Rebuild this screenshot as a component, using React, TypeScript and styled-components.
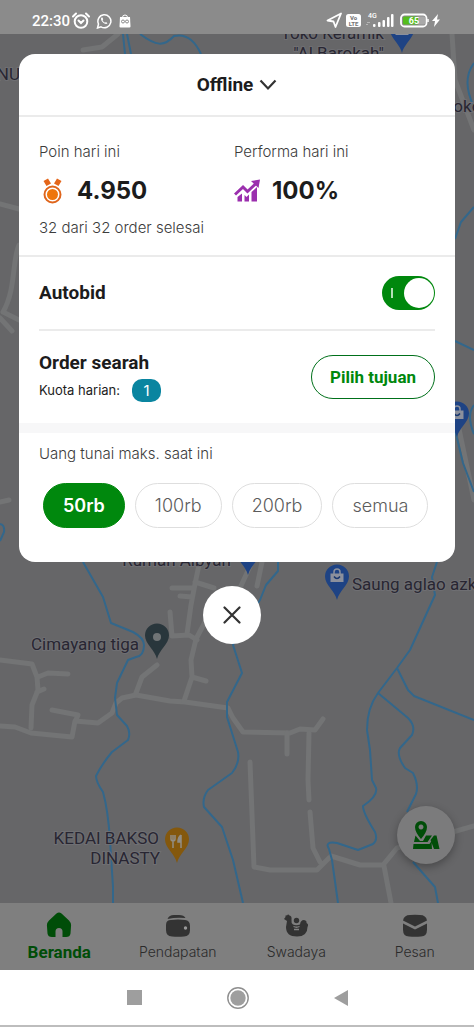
import React, { useState } from 'react';
import styled, { createGlobalStyle } from 'styled-components';

const GlobalStyle = createGlobalStyle`
  *, *::before, *::after { box-sizing: border-box; }
  body { margin: 0; background: #fff; font-family: Inter, "Liberation Sans", sans-serif; color: #1c1c1c; }
  button, input { font: inherit; }
`;

const Page = styled.div`
  min-height: 100vh;
  display: flex;
  flex-direction: column;
`;

const StatusBar = styled.header`
  height: 34px;
  padding: 8px 32px 0;
  display: flex;
  justify-content: space-between;
  background: #8b8b8b;
  color: #fff;
`;

const StatusGroup = styled.div`
  height: 26px;
  display: flex;
  align-items: center;
  gap: 6px;
`;

const Clock = styled.span`
  font: 500 15px/26px Roboto, sans-serif;
  margin-right: -4px;
`;

const Stage = styled.main`
  position: relative;
  flex: 1;
  display: flex;
  flex-direction: column;
  align-items: center;
  padding: 20px 19px 39px;
  overflow: hidden;
`;

const MapCanvas = styled.svg`
  position: absolute;
  inset: 0;
  width: 100%;
  height: 100%;
  font-family: Roboto, sans-serif;
  font-size: 17px;
`;

const Sheet = styled.section`
  position: relative;
  width: 100%;
  background: #fff;
  border-radius: 16px;
  overflow: hidden;
`;

const StatusPicker = styled.button`
  width: 100%;
  height: 63px;
  display: flex;
  align-items: center;
  justify-content: center;
  gap: 6px;
  padding: 0;
  border: 0;
  border-bottom: 2px solid #ebebeb;
  background: none;
  color: #1c1c1c;
  font: 700 19px/24px Roboto, sans-serif;
`;

const Stats = styled.div`
  height: 140px;
  display: grid;
  grid-template-columns: 195px 1fr;
  align-content: start;
  padding: 24px 20px 0;
  border-bottom: 2px solid #ebebeb;
`;

const Muted = styled.p`
  margin: 0;
  font-size: 15px;
  line-height: 22px;
  font-weight: 300;
  color: #3c3c3c;
`;

const Figure = styled.div`
  height: 54px;
  padding-top: 2px;
  display: flex;
  align-items: center;
  gap: 12px;
  font-size: 24px;
  line-height: 30px;
  font-weight: 700;
`;

const Block = styled.div<{ $height: number; $rule?: boolean }>`
  height: ${(p) => p.$height}px;
  margin: 0 20px;
  display: flex;
  align-items: center;
  justify-content: space-between;
  border-bottom: ${(p) => (p.$rule ? '2px solid #ebebeb' : '0')};
`;

const Title = styled.h2`
  margin: 0;
  font: 700 19px/26px Roboto, sans-serif;
`;

const Switch = styled.input`
  appearance: none;
  position: relative;
  width: 53px;
  height: 34px;
  margin: 0;
  border-radius: 17px;
  background: #8b8b8b;
  &:checked { background: #00880d; }
  &::before {
    content: '';
    position: absolute;
    left: 9px;
    top: 12px;
    width: 2px;
    height: 10px;
    background: #b5dfb8;
  }
  &::after {
    content: '';
    position: absolute;
    left: 2px;
    top: 2px;
    width: 30px;
    height: 30px;
    border-radius: 50%;
    background: #fff;
  }
  &:checked::after { left: 22px; }
`;

const Quota = styled.p`
  margin: 0;
  display: flex;
  align-items: center;
  gap: 12px;
  font-size: 13px;
  line-height: 28px;
`;

const QuotaBadge = styled.span`
  width: 29px;
  height: 23px;
  border-radius: 10px;
  background: #0a85a0;
  color: #fff;
  font-size: 15px;
  line-height: 23px;
  text-align: center;
`;

const OutlineButton = styled.button`
  width: 124px;
  height: 44px;
  padding: 0;
  border: 1px solid #00701a;
  border-radius: 22px;
  background: #fff;
  color: #00880d;
  font: 700 17px/24px Roboto, sans-serif;
`;

const Cash = styled.fieldset`
  margin: 0;
  padding: 20px 20px 34px;
  border: 0;
  border-top: 10px solid #f7f7f8;
`;

const Legend = styled(Muted).attrs({ as: 'legend' })`
  float: left;
  width: 100%;
  padding: 0;
  margin-top: -10px;
`;

const Chips = styled.div`
  clear: both;
  display: flex;
  gap: 10px;
  padding: 18px 0 0 4px;
`;

const ChipInput = styled.input`
  position: absolute;
  opacity: 0;
`;

const Chip = styled.label<{ $on: boolean }>`
  height: 45px;
  padding: 0 19px;
  display: flex;
  align-items: center;
  border: 1px solid ${(p) => (p.$on ? '#00880d' : '#dedede')};
  border-radius: 23px;
  background: ${(p) => (p.$on ? '#00880d' : '#fff')};
  color: ${(p) => (p.$on ? '#fff' : '#5c5c5c')};
  font-size: 18px;
  font-weight: ${(p) => (p.$on ? 600 : 300)};
`;

const CloseRow = styled.div`
  width: 100%;
  display: flex;
  justify-content: center;
  padding: 24px 10px 0 0;
`;

const RoundButton = styled.button`
  position: relative;
  width: 58px;
  height: 58px;
  padding: 0;
  border: 0;
  border-radius: 50%;
  display: grid;
  place-items: center;
  background: #fff;
`;

const MapButton = styled(RoundButton)`
  align-self: flex-end;
  margin-top: auto;
  background: #7b7b7c;
  box-shadow: 0 3px 8px rgba(0, 0, 0, 0.3);
`;

const TabBar = styled.nav`
  height: 67px;
  display: grid;
  grid-template-columns: repeat(4, 1fr);
  background: #7f7f7f;
`;

const Tab = styled.a<{ $active?: boolean }>`
  display: flex;
  flex-direction: column;
  align-items: center;
  padding-top: 9px;
  gap: 1px;
  color: ${(p) => (p.$active ? '#004d08' : '#2b2b2b')};
  font-family: ${(p) => (p.$active ? 'Roboto' : 'Inter')}, sans-serif;
  font-size: ${(p) => (p.$active ? 17 : 14)}px;
  font-weight: ${(p) => (p.$active ? 700 : 300)};
  line-height: 26px;
  text-decoration: none;
`;

const SystemBar = styled.footer`
  height: 57px;
  display: flex;
  justify-content: center;
  align-items: center;
  gap: 85px;
  background: #fff;
  border-bottom: 2px solid #bdbdbd;
`;

const SystemButton = styled.button`
  display: flex;
  padding: 0;
  border: 0;
  background: none;
`;

const Pin = ({ x, y, fill, children }: { x: number; y: number; fill: string; children?: React.ReactNode }) => (
  <g transform={`translate(${x} ${y})`}>
    <path d="M0 35C-2 26-12 20-12 11.500A12 12 0 0 1 12 11.500C12 20 2 26 0 35Z" fill={fill} />
    {children}
  </g>
);

const Bag = () => (
  <g>
    <path d="M-6.500 8.500h13v8.500h-13z" fill="#8b909c" />
    <path d="M-3 9V7a3 3 0 0 1 6 0v2" fill="none" stroke="#8b909c" strokeWidth="1.500" />
    <path d="M-3 11.500q3 4 6 0" fill="none" stroke="#17366e" strokeWidth="1.500" />
  </g>
);

const AreaMap = () => (
  <MapCanvas viewBox="0 34 474 869" preserveAspectRatio="xMidYMin slice" aria-label="Peta">
    <rect y="34" width="474" height="869" fill="#666668" />
    <g fill="none" stroke="#737475" strokeWidth="5" strokeLinecap="round" strokeLinejoin="round">
      <path d="M83 50L102 47 118 34" />
      <path d="M452 34L455 80 474 130" />
      <path d="M0 204L19 209M19 245C12 260 16 290 3 312L19 320M0 318L12 331M0 502L9 500" />
      <path d="M455 410L474 500" />
      <path d="M0 660L32 664 37 677 38 690 32 705 31 728M38 677L48 673 68 674M37 692L44 689" />
      <path d="M0 726L15 727 31 733 72 737 75 721 98 723 112 713 116 703 122 698 136 695 170 701 185 702 228 708 233 718 243 732 290 733 300 729 315 730 323 719M52 710L78 715 75 722" />
      <path d="M136 693L142 677 157 665M184 701L192 677 191 660 196 639 205 622M192 677L206 681M170 612L172 636 189 635 197 640M187 634L191 605 195 584 200 560M195 582L214 588M172 588L193 588M180 596L192 597M240 588L252 562M257 586L262 562" />
      <path d="M287 733V754M250 762L254 867 270 870 317 870 329 858M309 733L308 780 309 800M310 812L313 848 320 862M331 856L360 865 383 865 397 848 474 826M384 866L391 903" />
    </g>
    <g fill="none" stroke="#33678b" strokeWidth="2" strokeLinejoin="round">
      <path d="M123 34L125 54M127 34L131 54M140 34C156 46 164 47 174 36Q191 32 201 54" />
      <path d="M474 63Q461 80 474 107M474 207L461 222 455 239M455 341L474 350M455 430L463 463 474 492M474 405Q466 415 474 434M0 524Q5 525 4 532L0 541" />
      <path d="M83 562L103 597 111 623 133 632Q144 638 144 645 144 656 136 657L128 660 117 683 115 698 117 715 127 726Q131 733 128 740L112 752Q102 764 96 776 96 782 103 792 108 810 110 840L113 887V903" />
      <path d="M278 562V571L266 585 260 600 240 630 233 645 242 673 227 702 227 717 238 752Q240 763 232 773L208 790Q202 798 204 807L222 827 233 860 243 903" />
      <path d="M437 562L432 577 435 595 410 650 397 668 378 693Q367 708 367 730L370 750 372 780 376 788Q378 796 363 806 363 813 375 832 378 840 373 844L358 850 337 843Q324 841 329 849L332 860 338 903" />
      <path d="M397 668L408 690 414 696 474 720M378 693L408 718Q416 726 412 735L400 748Q396 755 405 768L413 773Q419 785 416 794L407 812M413 862L435 887 438 903" />
    </g>
    <g fill="#282632" stroke="#6f6f73" strokeWidth="2" paintOrder="stroke">
      <text x="384" y="39" textAnchor="end">Toko Keramik</text>
      <text x="384" y="59" textAnchor="end">"Al Barokah"</text>
      <text x="20" y="80" textAnchor="end">NU</text>
      <text x="444" y="112">Toko</text>
      <text x="231" y="566" textAnchor="end">Rumah Albyan</text>
      <text x="139" y="650" textAnchor="end">Cimayang tiga</text>
      <text x="352" y="590">Saung aglao azk</text>
      <text x="159" y="844" textAnchor="end">KEDAI BAKSO</text>
      <text x="160" y="864" textAnchor="end">DINASTY</text>
    </g>
    <Pin x={402} y={18} fill="#1e4384"><Bag /></Pin>
    <Pin x={457} y={402} fill="#1e4384"><Bag /></Pin>
    <Pin x={248} y={540} fill="#1e4384" />
    <Pin x={337} y={565} fill="#1e4384"><Bag /></Pin>
    <Pin x={157} y={624} fill="#29363c"><circle cy="13" r="4" fill="#707476" /></Pin>
    <Pin x={177} y={828} fill="#84580d">
      <g stroke="#918d85" strokeWidth="1.500" fill="none">
        <path d="M-6 7v4q0 2 2 2t2-2V7M-4 7v13M4 20V7" />
        <path d="M4 7q-3 2-3 7h3" fill="#918d85" />
      </g>
    </Pin>
  </MapCanvas>
);

const AlarmIcon = () => (
  <svg width="18" height="18" viewBox="0 0 18 18" fill="none" stroke="#fff" strokeWidth="2" strokeLinecap="round" aria-hidden="true">
    <circle cx="9" cy="9.500" r="6.300" /><path d="M1 4.500L4 1.500M14 1.500L17 4.500" /><path d="M6.500 8.500L9 11l2.500-2.500" />
  </svg>
);
const WhatsIcon = () => (
  <svg width="16" height="16" viewBox="0 0 15 16" fill="none" stroke="#fff" aria-hidden="true">
    <path d="M1 15l1-4A6.500 6.500 0 1 1 4.500 13.800z" strokeWidth="1.500" />
    <path d="M5 4.500c-1 1-.5 3 1.300 4.800S10 11.500 11 10.300L9.500 9l-1 .7Q6.800 9 6 7.200L6.700 6.300 6 4.500z" fill="#fff" stroke="none" />
  </svg>
);
const ShopIcon = () => (
  <svg width="14" height="14" viewBox="0 0 12 14" aria-hidden="true">
    <path d="M1 3h10l.5 9.500a1 1 0 0 1-1 1h-9a1 1 0 0 1-1-1z" fill="#fff" />
    <path d="M3.500 3.500a2.500 2.500 0 0 1 5 0" fill="none" stroke="#fff" />
    <circle cx="4" cy="7.500" r="1.500" fill="none" stroke="#8b8b8b" /><circle cx="8" cy="7.500" r="1.500" fill="none" stroke="#8b8b8b" />
  </svg>
);

const StatusRight = () => (
  <svg width="116" height="18" viewBox="0 0 116 18" fontFamily="Roboto, sans-serif" role="img" aria-label="Sinyal 4G, baterai 65 persen">
    <path d="M1.500 8.500L15 1.500 9.500 15 7.500 9.500z" fill="none" stroke="#fff" strokeWidth="1.800" strokeLinejoin="round" />
    <rect x="20" y="2" width="15" height="13" rx="2.500" fill="#fff" />
    <text x="27.500" y="8" fontSize="6" fontWeight="800" fill="#777" textAnchor="middle">Vo</text>
    <text x="27.500" y="14" fontSize="6" fontWeight="800" fill="#777" textAnchor="middle">LTE</text>
    <text x="42" y="6" fontSize="7" fontWeight="500" fill="#fff">4G</text>
    <path d="M40 12.500h2M41 10.500h3" stroke="#b5b5b5" />
    <g fill="#fff"><rect x="47" y="12" width="2.500" height="3" rx="1" /><rect x="52" y="10" width="2.500" height="5" rx="1" /><rect x="56.500" y="8" width="2.500" height="7" rx="1" /><rect x="61" y="5" width="2.500" height="10" rx="1" /><rect x="65" y="2" width="2.500" height="13" rx="1" /></g>
    <rect x="75" y="2.500" width="25.500" height="12" rx="3.500" fill="none" stroke="#fff" strokeWidth="1.800" />
    <rect x="77" y="4.500" width="15" height="8" rx="1.500" fill="#55bd1d" /><rect x="92" y="4.500" width="7" height="8" rx="1" fill="#a9a9a9" />
    <path d="M102 7v3" stroke="#fff" strokeWidth="1.500" />
    <text x="88" y="12" fontSize="9" fontWeight="700" fill="#fff" textAnchor="middle">65</text>
    <path d="M112 2l-6 7h3l-1 6 6-7.500h-3z" fill="#fff" />
  </svg>
);

const MedalIcon = () => (
  <svg width="26" height="26" viewBox="0 0 26 26" aria-hidden="true">
    <path d="M4.500 3L9 .5l3 5L7.500 8zM22.500 3L18 .5l-3 5L19.500 8z" fill="#e4661a" />
    <circle cx="13.500" cy="16.500" r="8" fill="#fff" stroke="#df651c" strokeWidth="2" /><circle cx="13.500" cy="16.500" r="5.500" fill="#ee750c" />
  </svg>
);
const ChartIcon = () => (
  <svg width="26" height="24" viewBox="0 0 26 24" aria-hidden="true" fill="#9b2fae">
    <path d="M3.500 18L8 14.500v8H3.500zM10.500 16l2 2 2.500-2.500v7h-4.500zM17.500 13L23 8v14.500h-5.500z" />
    <path d="M1 15.500L9 8l4.500 4.500L22 4.500" stroke="#9b2fae" strokeWidth="3" fill="none" /><path d="M17 2l9-1.500-1.500 8.500z" />
  </svg>
);

const HomeIcon = () => (
  <svg width="26" height="26" viewBox="0 0 26 26" aria-hidden="true"><path d="M10.500 1.500Q13-.5 15.500 1.500L23 8.500Q25.500 11 25 14.500L24.500 21.500Q24 25 20 25H16.500V19.500Q16.500 16 13 16T9.500 19.500V25H6Q2 25 1.500 21.500L1 14.500Q.5 11 3 8.500z" fill="#004d08" /></svg>
);
const WalletIcon = () => (
  <svg width="26" height="26" viewBox="0 0 26 26" fill="#333" aria-hidden="true"><path d="M2.500 7Q4 3 9 3h5q5 0 6.500 3Q11 5 2.500 7z" /><path d="M1 13Q1 8 6 8q7-1 14 0 5 .5 5 6v4q0 6-6 6.500-6 .6-12 0Q1 24 1 18z" /><circle cx="20.500" cy="16" r="1.700" fill="#999" /></svg>
);
const HenIcon = () => (
  <svg width="26" height="26" viewBox="0 0 26 26" fill="#333" aria-hidden="true"><path d="M1 7L2.500 5Q2 2.500 4 3.500 5 1.500 6.500 3.500 9 4 8.500 7.500 8 11 10 12.500 13 14 17 12.500 17.500 8 21 8 24 8.500 23.500 11 26 12 24.500 15 24.500 24.500 14 24.500 3 24.500 3 15L4 9z" /><circle cx="13.500" cy="8.500" r="2.700" /><path d="M10.500 14.500q3 1.500 6 0M11 17.500h5" fill="none" stroke="#808080" strokeWidth="1.300" /></svg>
);
const MailIcon = () => (
  <svg width="26" height="26" viewBox="0 0 26 26" fill="#333" aria-hidden="true"><path d="M1 8.500Q2 3 8 3q5-.5 10 0 6 0 7 5.500L13 14.500z" /><path d="M1 11.500l12 6 12-6v6q0 7-6 7-6 .6-12 0-6 0-6-7z" /></svg>
);

const tabs = [
  { name: 'Beranda', icon: <HomeIcon /> },
  { name: 'Pendapatan', icon: <WalletIcon /> },
  { name: 'Swadaya', icon: <HenIcon /> },
  { name: 'Pesan', icon: <MailIcon /> },
];
const limits = ['50rb', '100rb', '200rb', 'semua'];

export default function App() {
  const [limit, setLimit] = useState('50rb');
  const [autobid, setAutobid] = useState(true);
  return (
    <Page>
      <GlobalStyle />
      <StatusBar>
        <StatusGroup><Clock>22:30</Clock><AlarmIcon /><WhatsIcon /><ShopIcon /></StatusGroup>
        <StatusGroup><StatusRight /></StatusGroup>
      </StatusBar>
      <Stage>
        <AreaMap />
        <Sheet>
          <StatusPicker>
            Offline
            <svg width="18" height="12" viewBox="0 0 18 12" fill="none" stroke="#333" strokeWidth="2.200" aria-hidden="true"><path d="M1.500 1.500L9 9.500l7.500-8" /></svg>
          </StatusPicker>
          <Stats>
            <div>
              <Muted>Poin hari ini</Muted>
              <Figure><MedalIcon />4.950</Figure>
              <Muted>32 dari 32 order selesai</Muted>
            </div>
            <div>
              <Muted>Performa hari ini</Muted>
              <Figure><ChartIcon />100%</Figure>
            </div>
          </Stats>
          <Block $height={74} $rule>
            <Title as="label" htmlFor="autobid">Autobid</Title>
            <Switch id="autobid" type="checkbox" role="switch" checked={autobid} onChange={() => setAutobid(!autobid)} />
          </Block>
          <Block $height={92}>
            <div>
              <Title>Order searah</Title>
              <Quota>Kuota harian: <QuotaBadge>1</QuotaBadge></Quota>
            </div>
            <OutlineButton>Pilih tujuan</OutlineButton>
          </Block>
          <Cash>
            <Legend>Uang tunai maks. saat ini</Legend>
            <Chips>
              {limits.map((v) => (
                <Chip key={v} $on={v === limit}>
                  <ChipInput type="radio" name="limit" checked={v === limit} onChange={() => setLimit(v)} />
                  {v}
                </Chip>
              ))}
            </Chips>
          </Cash>
        </Sheet>
        <CloseRow>
          <RoundButton aria-label="Tutup">
            <svg width="18" height="18" viewBox="0 0 18 18" stroke="#333" strokeWidth="2.200" strokeLinecap="round" aria-hidden="true"><path d="M1.500 1.500l15 15M16.500 1.500l-15 15" /></svg>
          </RoundButton>
        </CloseRow>
        <MapButton aria-label="Lokasi">
          <svg width="28" height="30" viewBox="0 0 28 30" fill="#004d08" aria-hidden="true">
            <path fillRule="evenodd" d="M9 19Q3 12 3 7a6 6 0 0 1 12 0Q15 12 9 19zM9 4.500a2.500 2.500 0 1 0 .01 0z" />
            <path d="M3.500 15.500L8 21h3l3-5.500h6L15.500 22H2zM1.500 24h16l2-3 .5 8H1zM22 15.500h2.500L27.500 29H22l-3.500-9z" />
          </svg>
        </MapButton>
      </Stage>
      <TabBar>
        {tabs.map((t, i) => (
          <Tab key={t.name} href="#" $active={i === 0}>{t.icon}{t.name}</Tab>
        ))}
      </TabBar>
      <SystemBar>
        <SystemButton aria-label="Aplikasi terbaru"><svg width="15" height="15" aria-hidden="true"><rect width="15" height="15" fill="#9e9e9e" /></svg></SystemButton>
        <SystemButton aria-label="Layar utama"><svg width="22" height="22" aria-hidden="true"><circle cx="11" cy="11" r="10.200" fill="none" stroke="#8f8f8f" strokeWidth="1.400" /><circle cx="11" cy="11" r="7.700" fill="#9e9e9e" /></svg></SystemButton>
        <SystemButton aria-label="Kembali"><svg width="14" height="16" aria-hidden="true"><path d="M14 0v16L0 8z" fill="#9e9e9e" /></svg></SystemButton>
      </SystemBar>
    </Page>
  );
}
